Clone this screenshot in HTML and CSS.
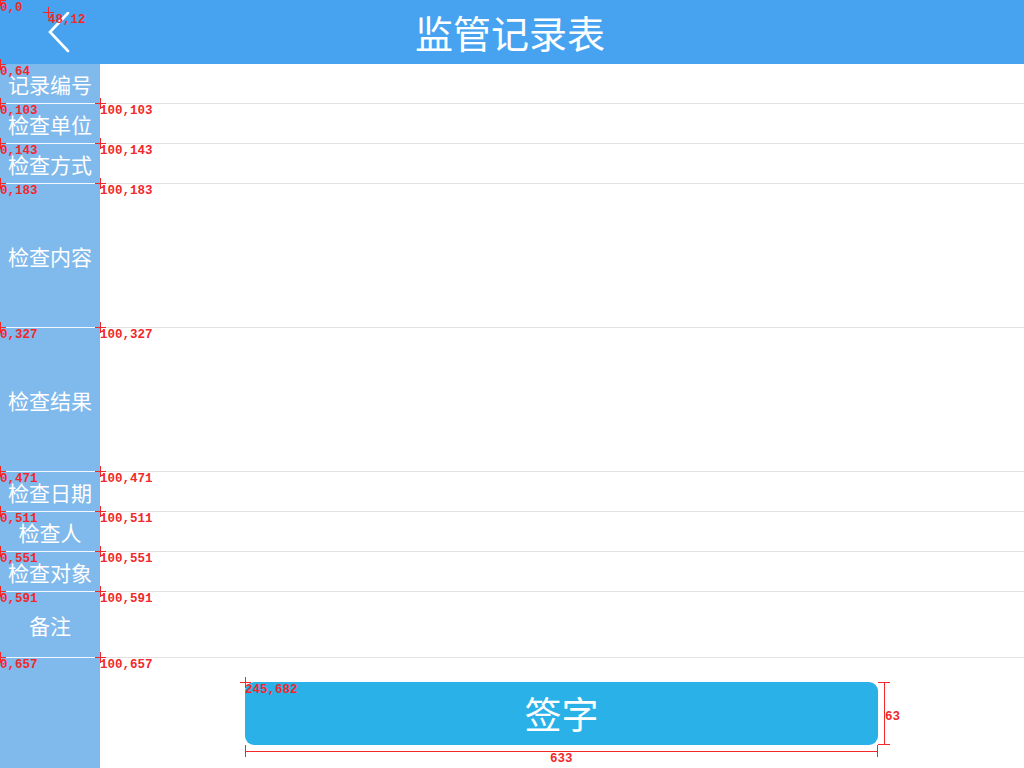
FILE: index.html
```html
<!DOCTYPE html>
<html lang="zh">
<head>
<meta charset="utf-8">
<title>监管记录表</title>
<link rel="stylesheet" href="styles.css">
</head>
<body>
<div class="page">
  <header class="topbar">
    <div class="back">
      <svg width="30" height="44" viewBox="0 0 30 44"><polyline points="21,1 3,20 21,39" fill="none" stroke="#fff" stroke-width="2.6" stroke-linecap="round" stroke-linejoin="miter"/></svg>
    </div>
    <h1 class="title">监管记录表</h1>
    <div class="spacer"></div>
  </header>
  <main class="form">
    <div class="row h40"><div class="label">记录编号</div><div class="value"></div></div>
    <div class="row h40"><div class="label">检查单位</div><div class="value"></div></div>
    <div class="row h40"><div class="label">检查方式</div><div class="value"></div></div>
    <div class="row h144"><div class="label">检查内容</div><div class="value"></div></div>
    <div class="row h144"><div class="label">检查结果</div><div class="value"></div></div>
    <div class="row h40"><div class="label">检查日期</div><div class="value"></div></div>
    <div class="row h40"><div class="label">检查人</div><div class="value"></div></div>
    <div class="row h40"><div class="label">检查对象</div><div class="value"></div></div>
    <div class="row h66"><div class="label">备注</div><div class="value"></div></div>
    <div class="footer">
      <div class="side"></div>
      <div class="actions"><button class="sign">签字</button></div>
    </div>
  </main>

  <div class="marks">
    <div class="mk" style="--x:0px;--y:0px"><i></i><span>0,0</span></div>
    <div class="mk" style="--x:48px;--y:12px"><i></i><span>48,12</span></div>
    <div class="mk" style="--x:0px;--y:64px"><i></i><span>0,64</span></div>
    <div class="mk" style="--x:0px;--y:103px"><i></i><span>0,103</span></div>
    <div class="mk" style="--x:100px;--y:103px"><i></i><span>100,103</span></div>
    <div class="mk" style="--x:0px;--y:143px"><i></i><span>0,143</span></div>
    <div class="mk" style="--x:100px;--y:143px"><i></i><span>100,143</span></div>
    <div class="mk" style="--x:0px;--y:183px"><i></i><span>0,183</span></div>
    <div class="mk" style="--x:100px;--y:183px"><i></i><span>100,183</span></div>
    <div class="mk" style="--x:0px;--y:327px"><i></i><span>0,327</span></div>
    <div class="mk" style="--x:100px;--y:327px"><i></i><span>100,327</span></div>
    <div class="mk" style="--x:0px;--y:471px"><i></i><span>0,471</span></div>
    <div class="mk" style="--x:100px;--y:471px"><i></i><span>100,471</span></div>
    <div class="mk" style="--x:0px;--y:511px"><i></i><span>0,511</span></div>
    <div class="mk" style="--x:100px;--y:511px"><i></i><span>100,511</span></div>
    <div class="mk" style="--x:0px;--y:551px"><i></i><span>0,551</span></div>
    <div class="mk" style="--x:100px;--y:551px"><i></i><span>100,551</span></div>
    <div class="mk" style="--x:0px;--y:591px"><i></i><span>0,591</span></div>
    <div class="mk" style="--x:100px;--y:591px"><i></i><span>100,591</span></div>
    <div class="mk" style="--x:0px;--y:657px"><i></i><span>0,657</span></div>
    <div class="mk" style="--x:100px;--y:657px"><i></i><span>100,657</span></div>
    <div class="mk" style="--x:245px;--y:682px"><i></i><span>245,682</span></div>
    <div class="dim-w"><span>633</span></div>
    <div class="dim-h"><span>63</span></div>
  </div>
</div>
</body>
</html>
```

FILE: styles.css
```css
* { box-sizing: border-box; margin: 0; padding: 0; }
html, body { width: 1024px; height: 768px; overflow: hidden; background: #fff; }
body { font-family: "Noto Sans CJK SC", "Noto Sans", sans-serif; }
.page { position: relative; width: 1024px; height: 768px; display: flex; flex-direction: column; }

.topbar {
  height: 64px;
  background: #47a3f0;
  display: grid;
  grid-template-columns: 100px 1fr 100px;
  align-items: center;
  color: #fff;
}
.back { display: flex; align-items: center; padding-left: 47px; height: 64px; }
.back svg { display: block; margin-top: 3px; }
.title {
  text-align: center;
  font-size: 38px;
  font-weight: 400;
  line-height: 64px;
  margin-left: -4px;
}

.form { flex: 1; display: flex; flex-direction: column; }
.row { display: flex; }
.row.h40 { height: 40px; }
.row.h144 { height: 144px; }
.row.h66 { height: 66px; }
.label {
  width: 100px;
  background: #80b9ec;
  border-bottom: 1px solid #f2f8fe;
  color: #fff;
  font-size: 21px;
  display: flex;
  align-items: center;
  justify-content: center;
  padding-top: 1px;
  line-height: 1;
}
.value { flex: 1; border-bottom: 1px solid #e2e2e2; }

.footer { flex: 1; display: flex; }
.side { width: 100px; background: #80b9ec; }
.actions { flex: 1; display: flex; justify-content: flex-start; align-items: flex-start; padding: 24px 0 0 145px; }
.sign {
  width: 633px;
  height: 63px;
  border: none;
  border-radius: 9px;
  background: #29b1e8;
  color: #fff;
  font-family: "Noto Sans CJK SC", "Noto Sans", sans-serif;
  font-size: 37px;
  line-height: 63px;
}

/* measurement annotations */
.marks { position: absolute; inset: 0; pointer-events: none; color: #f2282a; }
.mk { position: absolute; left: var(--x); top: var(--y); }
.mk i { position: absolute; left: -5px; top: -5px; width: 11px; height: 11px; }
.mk i::before { content: ""; position: absolute; left: 0; top: 5px; width: 11px; height: 1px; background: #f2282a; }
.mk i::after { content: ""; position: absolute; left: 5px; top: 0; width: 1px; height: 11px; background: #f2282a; }
.mk span {
  position: absolute;
  left: 0;
  top: 2px;
  font-family: "Liberation Mono", "DejaVu Sans Mono", monospace;
  font-weight: 700;
  font-size: 12.5px;
  line-height: 12px;
  white-space: nowrap;
}
.dim-w {
  position: absolute; left: 245px; top: 751px; width: 633px; height: 1px; background: #f2282a;
}
.dim-w::before, .dim-w::after { content: ""; position: absolute; top: -6px; width: 1px; height: 12px; background: #f2282a; }
.dim-w::before { left: 0; }
.dim-w::after { right: 0; }
.dim-w span {
  position: absolute; left: 305px; top: 2px;
  font-family: "Liberation Mono", "DejaVu Sans Mono", monospace; font-weight: 700; font-size: 12.5px; line-height: 12px;
}
.dim-h {
  position: absolute; left: 884px; top: 682px; width: 1px; height: 63px; background: #f2282a;
}
.dim-h::before, .dim-h::after { content: ""; position: absolute; left: -6px; width: 12px; height: 1px; background: #f2282a; }
.dim-h::before { top: 0; }
.dim-h::after { bottom: 0; }
.dim-h span {
  position: absolute; left: 1px; top: 29px;
  font-family: "Liberation Mono", "DejaVu Sans Mono", monospace; font-weight: 700; font-size: 12.5px; line-height: 12px;
}
```
